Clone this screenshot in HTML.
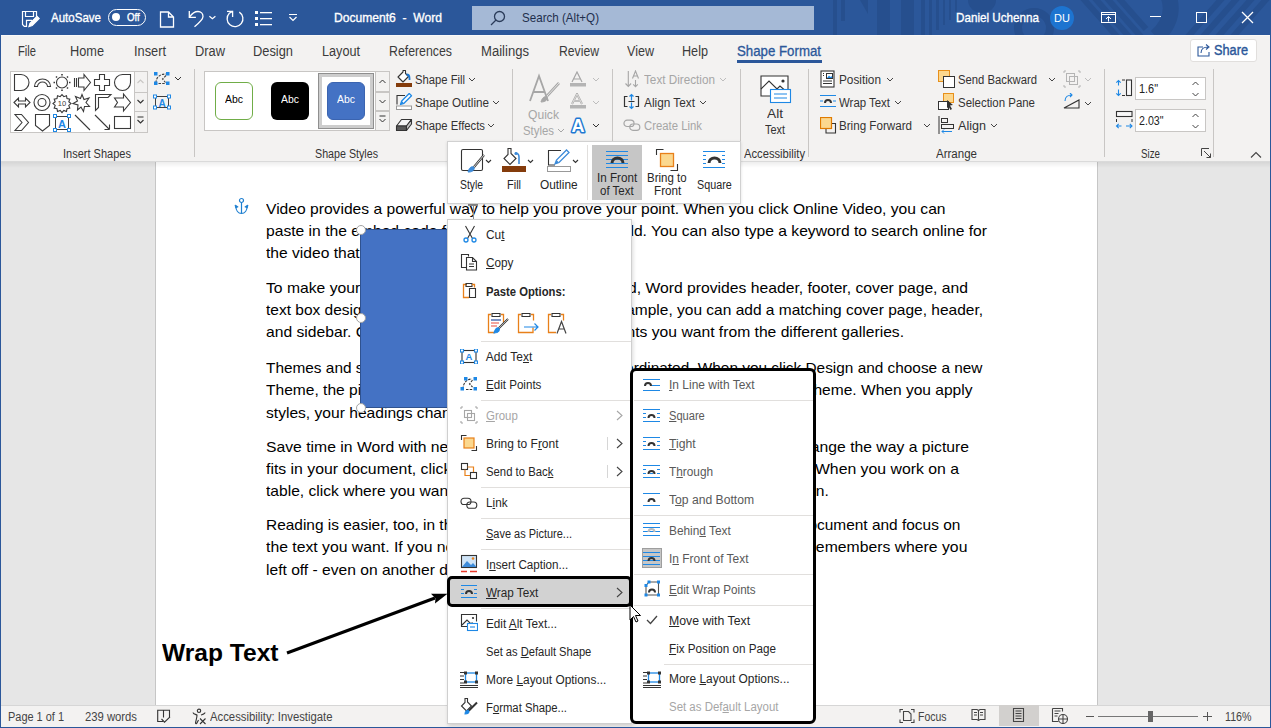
<!DOCTYPE html>
<html><head><meta charset="utf-8">
<style>
*{box-sizing:border-box}
html,body{margin:0;padding:0}
body{width:1271px;height:728px;overflow:hidden;position:relative;background:#e6e6e6;font-family:"Liberation Sans",sans-serif;color:#262626}
.a{position:absolute;white-space:nowrap}
#title{left:0;top:0;width:1271px;height:35px;background:#2b579a;overflow:hidden}
.tw{color:#fff;font-size:13px;-webkit-text-stroke:0.35px #fff}
#ribbon{left:1px;top:35px;width:1269px;height:127px;background:#f3f2f1;border-top:1px solid #faf9f8;border-bottom:1px solid #dadada}
.tab{font-size:13.8px;color:#3b3b3b;top:44px}
.rl{font-size:12px;color:#333}
.sep{position:absolute;width:1px;background:#c8c6c4}
#doc{left:1px;top:162px;width:1269px;height:544px;background:#e6e6e6}
#page{left:155px;top:162px;width:943px;height:544px;background:#fff;border-left:1px solid #c6c6c6;border-right:1px solid #c6c6c6}
.pl{font-size:15px;color:#000;position:absolute;white-space:nowrap;left:266px}
#status{left:1px;top:705px;width:1269px;height:22px;background:#f3f2f1;border-top:1px solid #d6d6d6}
.st{font-size:12px;color:#444;top:709px}
</style></head><body>
<div id="title" class="a"></div>

<!-- TITLE BAR -->
<svg class="a" style="left:0;top:0" width="1271" height="35">
 <g fill="#264f8e">
  <rect x="833" y="0" width="4" height="35"></rect><rect x="841" y="0" width="4" height="21"></rect>
  <path d="M860 0h8v14z"></path>
  <rect x="877" y="0" width="13" height="35"></rect><rect x="901" y="0" width="13" height="35"></rect>
  <rect x="921" y="0" width="4" height="35"></rect><rect x="929" y="0" width="3" height="35"></rect><rect x="936" y="0" width="3" height="30"></rect><rect x="943" y="0" width="2" height="25"></rect><rect x="949" y="0" width="2" height="20"></rect><rect x="955" y="0" width="2" height="12"></rect>
  <path d="M968 0a14 13 0 0 0 28 0z"></path>
 </g>
 <g fill="none" stroke="#264f8e">
  <circle cx="1034" cy="28" r="16" stroke-width="8"></circle>
  <path d="M1080 -5l40 45M1092 -5l40 45M1104 -5l40 45M1116 -5l30 34" stroke-width="6"></path>
  <path d="M1168 -5c6 15 2 30-12 42" stroke-width="16"></path>
  <path d="M1225 -5l-40 45M1240 -5l-40 45M1255 -5l-40 45M1270 -5l-40 45" stroke-width="6"></path>
 </g>
</svg>
<svg class="a" style="left:20px;top:9px" width="20" height="19" viewBox="0 0 20 19" fill="none" stroke="#fff" stroke-width="1.2"><path d="M16.5 7.5V2.5H2.5v13l1.8 1.8h2.2v-6h5.5"></path><path d="M5.5 2.5v5h8v-5"></path><path d="M9 17.5l1-3.2 7-7 2.2 2.2-7 7z" fill="#fff"></path></svg>
<div class="a tw" w="50" style="left: 51px; top: 10px; font-size: 13.5px; transform: scaleX(0.854); transform-origin: 0px 0px;">AutoSave</div>
<div class="a" style="left:108px;top:9px;width:38px;height:17px;border:1.3px solid #fff;border-radius:9px"></div>
<div class="a" style="left:112px;top:13px;width:8px;height:8px;background:#fff;border-radius:50%"></div>
<div class="a tw" w="12.7" style="left: 127px; top: 10.8px; font-size: 11px; transform: scaleX(0.8768); transform-origin: 0px 0px;">Off</div>
<svg class="a" style="left:159px;top:11px" width="16" height="17" fill="none" stroke="#fff" stroke-width="1.3"><path d="M1.5 1h8l5 5v10h-13z M9.5 1v5h5"></path></svg>
<svg class="a" style="left:187px;top:10px" width="30" height="18" fill="none" stroke="#fff" stroke-width="1.3"><path d="M2.3 1.1V7.4H8.9"></path><path d="M2.5 7.2C5 3.5 8 1.5 11 1.5C14 1.5 16 3.8 16 6.5C16 9 14.5 11 7.5 16.7"></path><path d="M22.4 6.2l3 2.5 3-2.5" stroke-width="1.2"></path></svg>
<svg class="a" style="left:224px;top:9px" width="21" height="20" fill="none" stroke="#fff" stroke-width="1.3"><path d="M15.3 3.1A7.9 7.9 0 1 1 5.3 4.3L8.6 2.4"></path><path d="M3 2.4H8.6V8"></path></svg>
<svg class="a" style="left:255px;top:10px" width="18" height="17" fill="#fff"><rect x="0" y="1" width="3" height="3"></rect><rect x="0" y="7" width="3" height="3"></rect><rect x="0" y="13" width="3" height="3"></rect><rect x="5" y="2" width="12" height="1.3"></rect><rect x="5" y="8" width="12" height="1.3"></rect><rect x="5" y="14" width="12" height="1.3"></rect></svg>
<svg class="a" style="left:288px;top:13px" width="10" height="9" fill="none" stroke="#fff" stroke-width="1.2"><path d="M1 1.5h8M1.5 4l3.5 3.5 3.5-3.5"></path></svg>
<div class="a tw" w="108" style="left: 334px; top: 10px; font-size: 13.5px; transform: scaleX(0.8959); transform-origin: 0px 0px;">Document6&nbsp; -&nbsp; Word</div>
<div class="a" style="left:472px;top:6px;width:342px;height:24px;background:#a5b9d6"></div>
<svg class="a" style="left:490px;top:10px" width="16" height="16" fill="none" stroke="#2b3c5a" stroke-width="1.3"><circle cx="9.5" cy="6.5" r="5"></circle><path d="M6 10L1 15"></path></svg>
<div class="a" w="77" style="left: 522px; top: 10px; font-size: 13.5px; color: rgb(31, 47, 77); transform: scaleX(0.8588); transform-origin: 0px 0px;">Search (Alt+Q)</div>
<div class="a tw" w="83" style="left: 956px; top: 10px; font-size: 13.5px; transform: scaleX(0.864); transform-origin: 0px 0px;">Daniel Uchenna</div>
<div class="a" style="left:1050px;top:6px;width:24px;height:24px;border-radius:50%;background:#1d74d0;color:#fff;font-size:11px;text-align:center;line-height:24px">DU</div>
<svg class="a" style="left:1101px;top:12px" width="15" height="11" fill="none" stroke="#fff" stroke-width="1"><rect x="0.5" y="0.5" width="14" height="10"></rect><path d="M0.5 2.5h14M7.5 9.5V4.5M5 7l2.5-2.5L10 7"></path></svg>
<div class="a" style="left:1150px;top:16px;width:11px;height:1px;background:#fff"></div>
<div class="a" style="left:1196px;top:12px;width:11px;height:11px;border:1.2px solid #fff"></div>
<svg class="a" style="left:1241px;top:11px" width="13" height="13" stroke="#fff" stroke-width="1.3"><path d="M1 1l11 11M12 1L1 12"></path></svg>
<div id="ribbon" class="a"></div>

<!-- TABS -->
<div class="a tab" w="18" style="left: 18px; transform: scaleX(0.8096); transform-origin: 0px 0px;">File</div>
<div class="a tab" w="34" style="left: 70px; transform: scaleX(0.9236); transform-origin: 0px 0px;">Home</div>
<div class="a tab" w="32" style="left: 134px; transform: scaleX(0.9271); transform-origin: 0px 0px;">Insert</div>
<div class="a tab" w="30" style="left: 195px; transform: scaleX(0.9316); transform-origin: 0px 0px;">Draw</div>
<div class="a tab" w="40" style="left: 253px; transform: scaleX(0.9312); transform-origin: 0px 0px;">Design</div>
<div class="a tab" w="38" style="left: 322px; transform: scaleX(0.917); transform-origin: 0px 0px;">Layout</div>
<div class="a tab" w="63" style="left: 389px; transform: scaleX(0.8928); transform-origin: 0px 0px;">References</div>
<div class="a tab" w="48" style="left: 481px; transform: scaleX(0.9484); transform-origin: 0px 0px;">Mailings</div>
<div class="a tab" w="40" style="left: 559px; transform: scaleX(0.884); transform-origin: 0px 0px;">Review</div>
<div class="a tab" w="27" style="left: 627px; transform: scaleX(0.9104); transform-origin: 0px 0px;">View</div>
<div class="a tab" w="26" style="left: 682px; transform: scaleX(0.9158); transform-origin: 0px 0px;">Help</div>
<div class="a tab" w="84" style="left: 737px; color: rgb(43, 87, 154); -webkit-text-stroke: 0.3px rgb(43, 87, 154); transform: scaleX(0.9607); transform-origin: 0px 0px;">Shape Format</div>
<div class="a" style="left:737px;top:60px;width:85px;height:3px;background:#2b579a"></div>
<div class="a" style="left:1190px;top:39px;width:67px;height:23px;background:#fff;border:1px solid #e1dfdd;border-radius:3px"></div>
<svg class="a" style="left:1197px;top:43px" width="14" height="14" fill="none" stroke="#2b579a" stroke-width="1.1"><path d="M6 4H1v9h11V9"></path><path d="M4 10c0-4 3-6 7-6M9 1.5l3 2.5-3 2.5"></path></svg>
<div class="a" w="34" style="left: 1214px; top: 42px; font-size: 14px; color: rgb(43, 87, 154); -webkit-text-stroke: 0.4px rgb(43, 87, 154); transform: scaleX(0.9101); transform-origin: 0px 0px;">Share</div>

<!-- INSERT SHAPES -->
<div class="a" style="left:10px;top:71px;width:138px;height:62px;background:#fff;border:1px solid #c8c6c4"></div>
<div class="a" style="left:134px;top:72px;width:13px;height:60px;background:#f3f2f1;border-left:1px solid #c8c6c4"></div>
<div class="a" style="left:134px;top:92px;width:13px;height:1px;background:#c8c6c4"></div>
<div class="a" style="left:134px;top:111px;width:13px;height:1px;background:#c8c6c4"></div>
<svg class="a" style="left:10px;top:71px" width="140" height="62" fill="none" stroke="#3a3a3a" stroke-width="1.1">
 <path d="M4.5 3.5h6.5a8 8 0 0 1 0 16H4.5z"></path>
 <path d="M24.5 15.5a8 7.5 0 0 1 16 0h-3a5 4.5 0 0 0-10 0z"></path>
 <circle cx="52" cy="11.5" r="5.5"></circle><path d="M52 3v1.5M52 18.5V20M43.5 11.5H45M59 11.5h1.5M46 5.5l1 1M57 16.5l1 1M58 5.5l-1 1M47 16.5l-1 1" stroke-width="1.6"></path>
 <path d="M64.5 7v9M66.5 7v9M68.5 7h5.5V3.5l6.5 8-6.5 8V16h-5.5z"></path>
 <path d="M89.5 3.5h5v5h5v6h-5v5h-5v-5h-5v-6h5z"></path>
 <path d="M120 3.5h-7.5a8 8 0 1 0 8 8V3.5z"></path>
 <path d="M4 31.5l4.5-4.5v3h7v-3l4.5 4.5-4.5 4.5v-3h-7v3z"></path>
 <circle cx="32" cy="31.5" r="8"></circle><circle cx="32" cy="31.5" r="4"></circle>
 <path d="M52 23.5l1.8 2.2 2.7-1 0.5 2.8 2.8 0.6-1 2.7 2.2 1.8-2.2 1.8 1 2.7-2.8 0.6-0.5 2.8-2.7-1-1.8 2.2-1.8-2.2-2.7 1-0.5-2.8-2.8-0.6 1-2.7-2.2-1.8 2.2-1.8-1-2.7 2.8-0.6 0.5-2.8 2.7 1z"></path>
 <text x="52" y="34.5" font-size="7.5" fill="#3a3a3a" stroke="none" text-anchor="middle" font-family="Liberation Sans">10</text>
 <path d="M72 23.5l2 5 5-1.5-3 4.5 3.5 4-5 0-1 5-2.5-4.5-3.5 3 0.5-5-5-1.5 4.5-2.5-2-4.5 5 2z"></path>
 <path d="M85.5 39.5v-16h15.5l-3 3H88.5v10z"></path>
 <path d="M104.5 27h9v-4l7 8.5-7 8.5v-4h-9l3-4.5z"></path>
 <path d="M5 43.5h6.5l7 8-7 8H5l7-8z"></path>
 <path d="M25.5 43.5h14v11l-7 5.5-7-5.5z"></path>
 <path d="M65 44l15 15M85 44l14 14M99.5 58.5v-5M99.5 58.5h-5"></path>
 <rect x="104.5" y="45.5" width="16" height="12"></rect>
 <path d="M127.5 12l3-3 3 3" stroke="#c8c6c4"></path>
 <path d="M127.5 29l3 3 3-3" stroke="#333"></path>
 <path d="M127.5 46h6M127.5 49l3 3 3-3" stroke="#333"></path>
</svg>
<svg class="a" style="left:52px;top:113px" width="20" height="20"><rect x="3.5" y="3.5" width="13" height="13" fill="none" stroke="#404040"></rect><g fill="#fff" stroke="#1e88e5"><rect x="1.5" y="1.5" width="3" height="3"></rect><rect x="15.5" y="1.5" width="3" height="3"></rect><rect x="1.5" y="15.5" width="3" height="3"></rect><rect x="15.5" y="15.5" width="3" height="3"></rect></g><text x="10" y="15" font-size="11" font-weight="bold" fill="#1e88e5" text-anchor="middle" font-family="Liberation Sans">A</text></svg>
<svg class="a" style="left:153px;top:71px" width="30" height="15" fill="none"><path d="M3 12c0-5 3-9 10-9M5.5 12.5h7M13 4.5l-3.5 3.5 3 3.5" stroke="#404040" stroke-width="1.1" stroke-dasharray="2.5 1.2"></path><g fill="#1e88e5"><rect x="1" y="1" width="3.5" height="3.5"></rect><rect x="13" y="1" width="3.5" height="3.5"></rect><rect x="1" y="10.5" width="3.5" height="3.5"></rect><rect x="13" y="10.5" width="3.5" height="3.5"></rect></g><path d="M22 6l3 3 3-3" stroke="#333"></path></svg>
<svg class="a" style="left:152px;top:94px" width="20" height="16"><rect x="3.5" y="2.5" width="13" height="11" fill="none" stroke="#404040"></rect><g fill="#fff" stroke="#1e88e5"><rect x="1.5" y="1" width="3" height="3"></rect><rect x="15.5" y="1" width="3" height="3"></rect><rect x="1.5" y="12" width="3" height="3"></rect><rect x="15.5" y="12" width="3" height="3"></rect></g><text x="10" y="12.5" font-size="10" font-weight="bold" fill="#1e88e5" text-anchor="middle" font-family="Liberation Sans">A</text></svg>
<div class="a rl" w="68" style="left: 63px; top: 146.7px; transform: scaleX(0.9183); transform-origin: 0px 0px;">Insert Shapes</div>
<div class="sep" style="left:194px;top:69px;height:88px"></div>

<!-- SHAPE STYLES -->
<div class="a" style="left:204px;top:71px;width:186px;height:60px;background:#fff;border:1px solid #c8c6c4"></div>
<div class="a" style="left:375px;top:71px;width:15px;height:60px;background:#f3f2f1;border:1px solid #c8c6c4"></div>
<div class="a" style="left:375px;top:91px;width:15px;height:2px;background:#c8c6c4"></div>
<div class="a" style="left:375px;top:110px;width:15px;height:2px;background:#c8c6c4"></div>
<svg class="a" style="left:375px;top:71px" width="15" height="60" fill="none" stroke="#333" stroke-width="1"><path d="M4.5 12l3-3 3 3M4.5 29l3 3 3-3M4.5 45h6M4.5 48l3 3 3-3"></path></svg>
<div class="a" style="left:215px;top:82px;width:38px;height:38px;border:1.3px solid #70ad47;border-radius:6px;background:#fff"></div>
<div class="a" w="18" style="left: 225px; top: 93px; font-size: 11px; color: rgb(0, 0, 0); transform: scaleX(0.9489); transform-origin: 0px 0px;">Abc</div>
<div class="a" style="left:271px;top:82px;width:38px;height:38px;border-radius:6px;background:#000"></div>
<div class="a" w="18" style="left: 281px; top: 93px; font-size: 11px; color: rgb(255, 255, 255); transform: scaleX(0.9489); transform-origin: 0px 0px;">Abc</div>
<div class="a" style="left:318px;top:73px;width:56px;height:56px;border:1px solid #8f8f8f;box-shadow:inset 0 0 0 3px #cdcdcd;background:#fff"></div>
<div class="a" style="left:327px;top:82px;width:38px;height:38px;border-radius:6px;background:#4472c4;border:1px solid #3b64b0"></div>
<div class="a" w="18" style="left: 337px; top: 93px; font-size: 11px; color: rgb(255, 255, 255); transform: scaleX(0.9489); transform-origin: 0px 0px;">Abc</div>

<svg class="a" style="left:395px;top:69px" width="18" height="19" fill="none"><path d="M8 1.5h2.5v3l3 3-5.5 5.5-5-5 5-5z" fill="#fff" stroke="#333" stroke-width="1.1" stroke-linejoin="round"></path><path d="M11.5 5.5c2 0 3 1.5 3 3.5v2" stroke="#1e78d2" stroke-width="1.8"></path><rect x="1" y="14" width="16" height="4" fill="#843c0c"></rect></svg>
<div class="a rl" w="50" style="left: 415px; top: 73px; transform: scaleX(0.9368); transform-origin: 0px 0px;">Shape Fill</div>
<svg class="a" style="left:468px;top:77px" width="8" height="5" fill="none" stroke="#444"><path d="M1 1l3 3 3-3"></path></svg>
<svg class="a" style="left:395px;top:93px" width="18" height="18" fill="none"><path d="M2 11.5V2.5h8" stroke="#333" stroke-width="1.1"></path><path d="M5.5 11.5l1.2-3.5 7.5-7.5 2.3 2.3-7.5 7.5z" fill="#fff" stroke="#1e88e5" stroke-width="1.3" stroke-linejoin="round"></path><path d="M5.5 11.5l3.5-1.2-2.3-2.3z" fill="#1e88e5"></path><rect x="1.5" y="13" width="15" height="3.5" fill="#fff" stroke="#999"></rect></svg>
<div class="a rl" w="74" style="left: 415px; top: 96px; transform: scaleX(0.9729); transform-origin: 0px 0px;">Shape Outline</div>
<svg class="a" style="left:492px;top:100px" width="8" height="5" fill="none" stroke="#444"><path d="M1 1l3 3 3-3"></path></svg>
<svg class="a" style="left:395px;top:118px" width="18" height="14" fill="none" stroke-linejoin="round"><path d="M1.5 8l5-6.5h10l-5 6.5z" fill="#f5f5f5" stroke="#333" stroke-width="1.1"></path><path d="M1.5 8h10v4.5h-10z" fill="#595959" stroke="#333" stroke-width="1.1"></path><path d="M11.5 8l5-6.5v4.5l-5 6.5z" fill="#c8c8c8" stroke="#333" stroke-width="1.1"></path></svg>
<div class="a rl" w="70" style="left: 415px; top: 119px; transform: scaleX(0.9396); transform-origin: 0px 0px;">Shape Effects</div>
<svg class="a" style="left:487px;top:123px" width="8" height="5" fill="none" stroke="#444"><path d="M1 1l3 3 3-3"></path></svg>
<div class="a rl" w="63" style="left: 315px; top: 146.7px; transform: scaleX(0.8909); transform-origin: 0px 0px;">Shape Styles</div>
<div class="sep" style="left:512px;top:69px;height:88px"></div>

<!-- WORDART -->
<svg class="a" style="left:528px;top:73px" width="34" height="32" fill="none" stroke="#a6a6a6" stroke-width="1.8"><path d="M2 28L11 3l9 25M5.5 19h11"></path><path d="M13 29c1-4 3-6 6-5 1 2-1 5-6 5z" fill="#a6a6a6" stroke-width="1"></path><path d="M19 23l12-13" stroke-width="2.6"></path><path d="M19 23l12-13" stroke="#f3f2f1" stroke-width="0.8"></path></svg>
<div class="a rl" w="31" style="left: 528px; top: 106.5px; font-size: 13px; color: rgb(166, 166, 166); transform: scaleX(0.9328); transform-origin: 0px 0px;">Quick</div>
<div class="a rl" w="31" style="left: 523px; top: 122.5px; font-size: 13px; color: rgb(166, 166, 166); transform: scaleX(0.8756); transform-origin: 0px 0px;">Styles</div>
<svg class="a" style="left:557px;top:128px" width="8" height="5" fill="none" stroke="#a6a6a6"><path d="M1 1l3 3 3-3"></path></svg>
<svg class="a" style="left:569px;top:71px" width="18" height="17"><path d="M3 11L8 1l5 10M4.5 8h7" fill="none" stroke="#a6a6a6" stroke-width="1.2"></path><rect x="1" y="12" width="16" height="3.5" fill="#b4b4b4"></rect></svg>
<svg class="a" style="left:592px;top:77px" width="8" height="5" fill="none" stroke="#bdbdbd"><path d="M1 1l3 3 3-3"></path></svg>
<svg class="a" style="left:569px;top:93px" width="18" height="17"><path d="M3 11L8 1l5 10M4.5 8h7" fill="none" stroke="#a6a6a6" stroke-width="2"></path><path d="M3 11L8 1l5 10M4.5 8h7" fill="none" stroke="#f3f2f1" stroke-width="0.7"></path><rect x="1" y="12" width="16" height="3.5" fill="#b4b4b4"></rect></svg>
<svg class="a" style="left:592px;top:100px" width="8" height="5" fill="none" stroke="#bdbdbd"><path d="M1 1l3 3 3-3"></path></svg>
<svg class="a" style="left:568px;top:115px" width="20" height="19"><text x="10" y="16.5" text-anchor="middle" font-family="Liberation Sans" font-weight="bold" font-size="18" fill="#fff" stroke="#1e78d2" stroke-width="3" paint-order="stroke" stroke-linejoin="round">A</text></svg>
<svg class="a" style="left:592px;top:123px" width="8" height="5" fill="none" stroke="#333"><path d="M1 1l3 3 3-3"></path></svg>
<div class="sep" style="left:612px;top:69px;height:88px"></div>

<!-- TEXT -->
<svg class="a" style="left:623px;top:70px" width="18" height="18" fill="none" stroke="#a6a6a6" stroke-width="1.1"><path d="M5.3 1v15.5M2.5 13.5l2.8 3 2.8-3"></path><path d="M9.5 8.5L12.5 1l3 7.5M10.5 6h4M12.5 10v6.5M10.2 14.3l2.3 2.3 2.3-2.3"></path></svg>
<div class="a rl" w="71" style="left: 644px; top: 73px; color: rgb(166, 166, 166); transform: scaleX(0.9766); transform-origin: 0px 0px;">Text Direction</div>
<svg class="a" style="left:719px;top:77px" width="8" height="5" fill="none" stroke="#bdbdbd"><path d="M1 1l3 3 3-3"></path></svg>
<svg class="a" style="left:623px;top:93px" width="18" height="18" fill="none" stroke-width="1.2"><path d="M4.5 3.5h-3v10h3M12.5 3.5h3v10h-3" stroke="#333"></path><path d="M5.5 8.5h6" stroke="#333" stroke-width="1"></path><path d="M8.5 7.5V1.5M6.5 3.5l2-2 2 2M8.5 9.5v6M6.5 13.5l2 2 2-2" stroke="#1e88e5"></path></svg>
<div class="a rl" w="51" style="left: 644px; top: 96px; transform: scaleX(0.9843); transform-origin: 0px 0px;">Align Text</div>
<svg class="a" style="left:699px;top:100px" width="8" height="5" fill="none" stroke="#444"><path d="M1 1l3 3 3-3"></path></svg>
<svg class="a" style="left:623px;top:119px" width="18" height="13" fill="none" stroke="#a6a6a6" stroke-width="1.2"><rect x="1" y="1.2" width="10" height="6.3" rx="3.1"></rect><rect x="6.8" y="5" width="10" height="6.3" rx="3.1"></rect></svg>
<div class="a rl" w="58" style="left: 644px; top: 119px; color: rgb(166, 166, 166); transform: scaleX(0.945); transform-origin: 0px 0px;">Create Link</div>
<div class="sep" style="left:740px;top:69px;height:88px"></div>

<!-- ACCESSIBILITY -->
<svg class="a" style="left:760px;top:75px" width="32" height="29"><path d="M1 1h27v20H1z" fill="#fff" stroke="#333" stroke-width="1.1"></path><path d="M1 14l8-8 8 8 3-3 8 7" fill="none" stroke="#333" stroke-width="1.1"></path><circle cx="23" cy="6" r="1.6" fill="#333"></circle><rect x="10.5" y="14.5" width="20" height="13" fill="#fff" stroke="#1e88e5" stroke-width="1.1"></rect><path d="M14 19h13M14 23h13" stroke="#1e88e5" stroke-width="1.1"></path></svg>
<div class="a rl" w="16" style="left: 767px; top: 106px; font-size: 13px; transform: scaleX(1.0546); transform-origin: 0px 0px;">Alt</div>
<div class="a rl" w="20" style="left: 765px; top: 122px; font-size: 13px; transform: scaleX(0.8388); transform-origin: 0px 0px;">Text</div>
<div class="a rl" w="61" style="left: 744px; top: 146.7px; transform: scaleX(0.9333); transform-origin: 0px 0px;">Accessibility</div>
<div class="sep" style="left:808px;top:69px;height:88px"></div>

<!-- ARRANGE -->
<svg class="a" style="left:820px;top:70px" width="16" height="18" fill="none"><rect x="1" y="1" width="13" height="16" fill="#fff" stroke="#333" stroke-width="1.1"></rect><rect x="6.5" y="3.5" width="6" height="5" stroke="#333"></rect><path d="M7 8l2-2.5 1.5 1.5 1-1 1 2z" fill="#1e88e5"></path><path d="M3 3.5h1M3 5.5h1M3 11h9M3 13.5h9" stroke="#333"></path></svg>
<div class="a rl" w="42" style="left: 839px; top: 73px; transform: scaleX(0.9835); transform-origin: 0px 0px;">Position</div>
<svg class="a" style="left:886px;top:77px" width="8" height="5" fill="none" stroke="#444"><path d="M1 1l3 3 3-3"></path></svg>
<svg class="a" style="left:820px;top:94px" width="17" height="14"><path d="M0 1.5h16M0 12.5h16M0 7h3M13 7h3" stroke="#1e88e5"></path><path d="M5 9a3 3 0 0 1 6 0" fill="none" stroke="#333" stroke-width="2"></path></svg>
<div class="a rl" w="51" style="left: 839px; top: 96px; transform: scaleX(0.9519); transform-origin: 0px 0px;">Wrap Text</div>
<svg class="a" style="left:894px;top:100px" width="8" height="5" fill="none" stroke="#444"><path d="M1 1l3 3 3-3"></path></svg>
<svg class="a" style="left:820px;top:117px" width="17" height="17" fill="none"><path d="M11 6.5h4.5v9.5H6V12" stroke="#333" stroke-width="1.1"></path><rect x="0.5" y="0.5" width="11" height="11" fill="#fbd88f" stroke="#e07b00" stroke-width="1.2"></rect></svg>
<div class="a rl" w="73" style="left: 839px; top: 119px; transform: scaleX(0.9687); transform-origin: 0px 0px;">Bring Forward</div>
<svg class="a" style="left:923px;top:123px" width="8" height="5" fill="none" stroke="#444"><path d="M1 1l3 3 3-3"></path></svg>
<svg class="a" style="left:938px;top:70px" width="18" height="18"><rect x="0.5" y="0.5" width="11" height="11" fill="#fcd78d" stroke="#e8901a"></rect><rect x="5.5" y="6.5" width="11" height="11" fill="#fff" stroke="#333"></rect></svg>
<div class="a rl" w="79" style="left: 958px; top: 73px; transform: scaleX(0.94); transform-origin: 0px 0px;">Send Backward</div>
<svg class="a" style="left:1048px;top:77px" width="8" height="5" fill="none" stroke="#444"><path d="M1 1l3 3 3-3"></path></svg>
<svg class="a" style="left:938px;top:93px" width="18" height="18"><rect x="5.5" y="0.5" width="10" height="9" fill="#fcd78d" stroke="#e8901a"></rect><rect x="0.5" y="8.5" width="10" height="8" fill="#fff" stroke="#333"></rect><path d="M9 7l6 5-3 0.5 2 3.5-1.5 1-2-3.5-1.5 2z" fill="#333"></path></svg>
<div class="a rl" w="77" style="left: 958px; top: 96px; transform: scaleX(0.9537); transform-origin: 0px 0px;">Selection Pane</div>
<svg class="a" style="left:938px;top:116px" width="18" height="18" fill="none"><path d="M1 0v18" stroke="#333"></path><rect x="3.5" y="2.5" width="6" height="4" stroke="#333"></rect><rect x="3.5" y="8.5" width="12" height="4" stroke="#333"></rect><path d="M4 15.5h10M6 13.5l-2 2 2 2" stroke="#1e88e5"></path></svg>
<div class="a rl" w="28" style="left: 958px; top: 119px; transform: scaleX(1.0492); transform-origin: 0px 0px;">Align</div>
<svg class="a" style="left:990px;top:123px" width="8" height="5" fill="none" stroke="#444"><path d="M1 1l3 3 3-3"></path></svg>
<svg class="a" style="left:1063px;top:70px" width="18" height="18" fill="none" stroke="#b4b4b4"><rect x="3.5" y="3.5" width="8" height="8"></rect><rect x="6.5" y="6.5" width="8" height="8"></rect><path d="M1 1h2M15 1h2M1 17h2M15 17h2M1 1v2M17 1v2M1 17v-2M17 17v-2"></path></svg>
<svg class="a" style="left:1084px;top:77px" width="8" height="5" fill="none" stroke="#bdbdbd"><path d="M1 1l3 3 3-3"></path></svg>
<svg class="a" style="left:1063px;top:93px" width="18" height="16" fill="none"><path d="M1 15L16 7v8z" stroke="#333" stroke-width="1.1"></path><path d="M2 8c0-4 3-6 7-6M7 0l2 2-2 2" stroke="#1e88e5" stroke-width="1.1"></path></svg>
<svg class="a" style="left:1084px;top:101px" width="8" height="5" fill="none" stroke="#444"><path d="M1 1l3 3 3-3"></path></svg>
<div class="a rl" w="41" style="left: 936px; top: 146.7px; transform: scaleX(0.9601); transform-origin: 0px 0px;">Arrange</div>
<div class="sep" style="left:1104px;top:69px;height:88px"></div>

<!-- SIZE -->
<svg class="a" style="left:1115px;top:78px" width="18" height="21" fill="none"><path d="M3.5 2.5v5M1.3 4.7l2.2-2.2 2.2 2.2M3.5 11.5v6M1.3 15.3l2.2 2.2 2.2-2.2" stroke="#1e88e5" stroke-width="1.1"></path><rect x="11.5" y="2" width="5" height="15.5" fill="#f8f8f8" stroke="#333" stroke-width="1.1"></rect><path d="M7 2h3M7 17.5h3" stroke="#333"></path></svg>
<div class="a" style="left:1135px;top:77px;width:71px;height:23px;background:#fff;border:1px solid #c8c6c4"></div>
<div class="a" w="19" style="left: 1139px; top: 81px; font-size: 13px; color: rgb(34, 34, 34); transform: scaleX(0.8375); transform-origin: 0px 0px;">1.6"</div>
<svg class="a" style="left:1191px;top:81px" width="9" height="16" fill="none" stroke="#444"><path d="M1.5 4l3-3 3 3M1.5 12l3 3 3-3"></path></svg>
<svg class="a" style="left:1115px;top:110px" width="18" height="20" fill="none"><rect x="1.5" y="1.5" width="15.5" height="5" fill="#f8f8f8" stroke="#333" stroke-width="1.1"></rect><path d="M1.5 9v3M17 9v3" stroke="#333"></path><path d="M1.5 16h5M3.7 13.8L1.5 16l2.2 2.2M11 16h6M14.8 13.8L17 16l-2.2 2.2" stroke="#1e88e5" stroke-width="1.1"></path></svg>
<div class="a" style="left:1135px;top:109px;width:71px;height:23px;background:#fff;border:1px solid #c8c6c4"></div>
<div class="a" w="24.5" style="left: 1139px; top: 113px; font-size: 13px; color: rgb(34, 34, 34); transform: scaleX(0.8188); transform-origin: 0px 0px;">2.03"</div>
<svg class="a" style="left:1191px;top:113px" width="9" height="16" fill="none" stroke="#444"><path d="M1.5 4l3-3 3 3M1.5 12l3 3 3-3"></path></svg>
<div class="a rl" w="19" style="left: 1141px; top: 146.7px; transform: scaleX(0.8139); transform-origin: 0px 0px;">Size</div>
<svg class="a" style="left:1201px;top:148px" width="11" height="11" fill="none" stroke="#444"><path d="M0.5 8V0.5H8M3 3l6.5 6.5M9.5 5.5v4h-4"></path></svg>
<div class="sep" style="left:1213px;top:69px;height:88px"></div>
<svg class="a" style="left:1250px;top:151px" width="12" height="8" fill="none" stroke="#444" stroke-width="1.1"><path d="M1 6.5l5-5 5 5"></path></svg>
<div id="doc" class="a"></div>
<div id="page" class="a"></div>
<!-- DOCUMENT TEXT -->
<div class="pl" w="679.5" style="top: 200px; transform: scaleX(1.0417); transform-origin: 0px 0px;">Video provides a powerful way to help you prove your point. When you click Online Video, you can</div>
<div class="pl" w="721.0" style="top: 221.8px; transform: scaleX(1.043); transform-origin: 0px 0px;">paste in the embed code for the video you want to add. You can also type a keyword to search online for</div>
<div class="pl" w="263.6" style="top: 244px; transform: scaleX(1.0399); transform-origin: 0px 0px;">the video that best fits your document.</div>
<div class="pl" w="702.0" style="top: 278.8px; transform: scaleX(1.0463); transform-origin: 0px 0px;">To make your document look professionally produced, Word provides header, footer, cover page, and</div>
<div class="pl" w="717.0" style="top: 300.6px; transform: scaleX(1.0335); transform-origin: 0px 0px;">text box designs that complement each other. For example, you can add a matching cover page, header,</div>
<div class="pl" w="638.0" style="top: 323.3px; transform: scaleX(1.0444); transform-origin: 0px 0px;">and sidebar. Click Insert and then choose the elements you want from the different galleries.</div>
<div class="pl" w="716.5" style="top: 358.8px; transform: scaleX(1.0254); transform-origin: 0px 0px;">Themes and styles also help keep your document coordinated. When you click Design and choose a new</div>
<div class="pl" w="706.5" style="top: 380.6px; transform: scaleX(1.0372); transform-origin: 0px 0px;">Theme, the pictures, charts, and SmartArt graphics change to match your new theme. When you apply</div>
<div class="pl" w="377.2" style="top: 403.5px; transform: scaleX(1.0399); transform-origin: 0px 0px;">styles, your headings change to match the new theme.</div>
<div class="pl" w="703.0" style="top: 437.8px; transform: scaleX(1.0482); transform-origin: 0px 0px;">Save time in Word with new buttons that show up where you need them. To change the way a picture</div>
<div class="pl" w="693.0" style="top: 459.5px; transform: scaleX(1.0534); transform-origin: 0px 0px;">fits in your document, click it and a button for layout options appears next to it. When you work on a</div>
<div class="pl" w="562.7" style="top: 482px; transform: scaleX(1.0399); transform-origin: 0px 0px;">table, click where you want to add a row or a column, and then click the plus sign.</div>
<div class="pl" w="694.3" style="top: 516.3px; transform: scaleX(1.0292); transform-origin: 0px 0px;">Reading is easier, too, in the new Reading view. You can collapse parts of the document and focus on</div>
<div class="pl" w="701.4" style="top: 538.4px; transform: scaleX(1.0506); transform-origin: 0px 0px;">the text you want. If you need to stop reading before you reach the end, Word remembers where you</div>
<div class="pl" w="222.6" style="top: 561px; transform: scaleX(1.04); transform-origin: 0px 0px;">left off - even on another device.</div>
<svg class="a" style="left:234px;top:197px" width="16" height="18" fill="none" stroke="#1e7fd0" stroke-width="1.2"><circle cx="7.5" cy="3.5" r="2"></circle><path d="M7.5 5.5v11M1.8 8.5c0 5 2.5 8 5.7 8s5.7-3 5.7-8"></path><path d="M1 8l3.2 1.8-2.4 1.2z M14 8l-3.2 1.8 2.4 1.2z" fill="#1e7fd0" stroke-width="0.8"></path></svg>
<div class="a" style="left:1px;top:162px;width:1269px;height:6px;background:linear-gradient(rgba(0,0,0,0.07),rgba(0,0,0,0))"></div>
<div id="status" class="a"></div>
<!-- STATUS -->
<div class="a" w="56" style="left: 8px; top: 710.1px; font-size: 12px; color: rgb(68, 68, 68); transform: scaleX(0.9122); transform-origin: 0px 0px;">Page 1 of 1</div>
<div class="a" w="52" style="left: 85px; top: 710.1px; font-size: 12px; color: rgb(68, 68, 68); transform: scaleX(0.9391); transform-origin: 0px 0px;">239 words</div>
<svg class="a" style="left:157px;top:709px" width="15" height="15" fill="none" stroke="#333" stroke-width="1.1"><path d="M6 12.5H0.7V1.3h11.8v7M6.5 1.3V8.5"></path><path d="M4.5 10l3 3.2 5.5-5.3"></path></svg>
<svg class="a" style="left:191px;top:708px" width="17" height="17" fill="none" stroke="#333" stroke-width="1.1"><circle cx="8" cy="2.8" r="1.7"></circle><path d="M2 4.5c0 1.5 3 2 4 2.5 0 3-1 5-1.5 8 0 0.8 1 1 1.3 0.3L7.5 12M14 4.5c0 1.5-2.5 2-4 2.5"></path><path d="M9 10.5l5.5 5.5M14.5 10.5L9 16"></path></svg>
<div class="a" w="122.5" style="left: 210px; top: 710.1px; font-size: 12px; color: rgb(68, 68, 68); transform: scaleX(0.9419); transform-origin: 0px 0px;">Accessibility: Investigate</div>
<svg class="a" style="left:899px;top:708px" width="16" height="16" fill="none" stroke-width="1.1"><path d="M1 4.5v-3h3M12 1.5h3v3M15 11.5v3h-3M4 14.5H1v-3" stroke="#444"></path><path d="M4.5 3.5h5l2.5 2.5v6.5h-7.5z" stroke="#444"></path></svg>
<div class="a" w="28.5" style="left: 917.5px; top: 709.2px; font-size: 13px; color: rgb(68, 68, 68); transform: scaleX(0.8049); transform-origin: 0px 0px;">Focus</div>
<svg class="a" style="left:971px;top:708px" width="15" height="13" fill="none" stroke-width="1.1"><path d="M1 1.5h5l1.5 1 1.5-1h5v10h-5l-1.5 1-1.5-1H1z M7.5 2.5v9M3 4.5h3M3 7h3M9 4.5h3M9 7h3" stroke="#444"></path></svg>
<div class="a" style="left:999px;top:705px;width:40px;height:21px;background:#d2d0ce"></div>
<svg class="a" style="left:1012px;top:707px" width="13" height="16" fill="none" stroke-width="1.1"><path d="M1.5 1.5h10v13h-10z M3.5 4h6M3.5 6.5h6M3.5 9h6M3.5 11.5h6" stroke="#444"></path></svg>
<svg class="a" style="left:1051px;top:707px" width="17" height="17" fill="none" stroke-width="1.1"><path d="M1.5 1.5h10v3M1.5 1.5v13h6M3.5 4h6M3.5 6.5h4M3.5 9h3" stroke="#444"></path><circle cx="12" cy="12" r="4.5" stroke="#444"></circle><path d="M7.5 12h9M12 7.5v9" stroke="#444"></path></svg>
<div class="a" style="left:1086px;top:716px;width:8px;height:1px;background:#555"></div>
<div class="a" style="left:1098px;top:716px;width:100px;height:1px;background:#777"></div>
<div class="a" style="left:1148px;top:711px;width:5px;height:11px;background:#666"></div>
<div class="a" style="left:1203px;top:716px;width:9px;height:1px;background:#555"></div>
<div class="a" style="left:1207px;top:712px;width:1px;height:9px;background:#555"></div>
<div class="a" w="26.5" style="left: 1224.5px; top: 710.1px; font-size: 12px; color: rgb(68, 68, 68); transform: scaleX(0.8889); transform-origin: 0px 0px;">116%</div>
<!-- SHAPE -->
<div class="a" style="left:360px;top:229px;width:227px;height:179px;background:#4472c4;border:1px solid #2f528f"></div>
<div class="a" style="left:356.0px;top:224.5px;width:10px;height:10px;border-radius:50%;background:#fff;border:1.8px solid #a3a3a3"></div>
<div class="a" style="left:356.0px;top:313.0px;width:10px;height:10px;border-radius:50%;background:#fff;border:1.8px solid #a3a3a3"></div>
<div class="a" style="left:356.0px;top:403.0px;width:10px;height:10px;border-radius:50%;background:#fff;border:1.8px solid #a3a3a3"></div>
<div class="a" style="left:468px;top:204px;width:10px;height:1.5px;background:#8c8c8c"></div>
<div class="a" style="left:472.5px;top:204px;width:1.3px;height:16px;background:#8c8c8c"></div>
<!-- MINI TOOLBAR -->
<div class="a" style="left:447px;top:141px;width:294px;height:63px;background:#fff;border:1px solid #d1d1d1;box-shadow:0 1px 3px rgba(0,0,0,0.12)"></div>
<svg class="a" style="left:459px;top:147px" width="36" height="27" fill="none"><rect x="2.5" y="2.5" width="21" height="21" rx="1.5" stroke="#333" stroke-width="1.1"></rect><path d="M9 25c1-4 3-6 6-5 1 2-1 5-5 5z" fill="#3d8bd9" stroke="#3d8bd9"></path><path d="M15 20l10-12" stroke="#333" stroke-width="2.2"></path><path d="M15 20l10-12" stroke="#fff" stroke-width="0.8"></path><path d="M27 13l2.5 2.5 2.5-2.5" stroke="#333" stroke-width="1.1"></path></svg>
<svg class="a" style="left:501px;top:147px" width="36" height="27" fill="none"><path d="M7 1.5h3v5l5 5-6 6-6-6 4-4z" fill="#fff" stroke="#333" stroke-width="1.1"></path><path d="M14 6c3 0 4 2 4 4v7" stroke="#3d8bd9" stroke-width="1.6"></path><circle cx="15" cy="6.5" r="1.6" fill="#3d8bd9"></circle><rect x="1" y="19" width="24" height="6" fill="#843c0c"></rect><path d="M27 13l2.5 2.5 2.5-2.5" stroke="#333" stroke-width="1.1"></path></svg>
<svg class="a" style="left:546px;top:147px" width="36" height="27" fill="none"><path d="M9 18H2.5V3.5H15" stroke="#333" stroke-width="1.1"></path><path d="M9 17l1.5-4 10-10 2.5 2.5-10 10z" stroke="#3d8bd9" stroke-width="1.3" fill="#fff"></path><path d="M9 17l4-1.5-2.5-2.5z" fill="#3d8bd9"></path><rect x="1.5" y="19.5" width="23" height="5" fill="#fff" stroke="#999"></rect><path d="M27 13l2.5 2.5 2.5-2.5" stroke="#333" stroke-width="1.1"></path></svg>
<div class="a" style="left:587px;top:145px;width:1px;height:55px;background:#e1dfdd"></div>
<div class="a" style="left:592px;top:145px;width:50px;height:55px;background:#c6c6c6"></div>
<svg class="a" style="left:606px;top:150px" width="23" height="19"><path d="M0 1.5h22M0 5.5h22M0 9.5h22M0 13.5h22M0 17.5h22" stroke="#1e88e5" stroke-width="1.1"></path><path d="M6 13a5.5 5 0 0 1 11 0" fill="none" stroke="#333" stroke-width="3"></path></svg>
<svg class="a" style="left:655px;top:148px" width="24" height="24" fill="none"><path d="M1.5 7V1.5h7M22.5 16v6.5h-7" stroke="#333" stroke-width="1.1"></path><rect x="5.5" y="5.5" width="13" height="13" fill="#fbd88f" stroke="#e8801a" stroke-width="1.3"></rect></svg>
<svg class="a" style="left:703px;top:150px" width="23" height="19"><path d="M0 1.5h22M0 17.5h22M0 5.5h3M19 5.5h3M0 9.5h3M19 9.5h3M0 13.5h3M19 13.5h3" stroke="#1e88e5" stroke-width="1.1"></path><path d="M6 13a5.5 5 0 0 1 11 0" fill="none" stroke="#333" stroke-width="3"></path></svg>
<div class="a" w="23.0" style="left: 460.4px; top: 177.7px; font-size: 12px; color: rgb(38, 38, 38); transform: scaleX(0.8618); transform-origin: 0px 0px;">Style</div>
<div class="a" w="14.0" style="left: 506.5px; top: 177.7px; font-size: 12px; color: rgb(38, 38, 38); transform: scaleX(0.9134); transform-origin: 0px 0px;">Fill</div>
<div class="a" w="37.6" style="left: 540px; top: 177.7px; font-size: 12px; color: rgb(38, 38, 38); transform: scaleX(0.9887); transform-origin: 0px 0px;">Outline</div>
<div class="a" w="40.2" style="left: 596.6px; top: 171.4px; font-size: 12px; color: rgb(38, 38, 38); transform: scaleX(0.972); transform-origin: 0px 0px;">In Front</div>
<div class="a" w="33.7" style="left: 600px; top: 184.3px; font-size: 12px; color: rgb(38, 38, 38); transform: scaleX(0.959); transform-origin: 0px 0px;">of Text</div>
<div class="a" w="39.6" style="left: 646.6px; top: 171.4px; font-size: 12px; color: rgb(38, 38, 38); transform: scaleX(0.9575); transform-origin: 0px 0px;">Bring to</div>
<div class="a" w="27.3" style="left: 653.6px; top: 184.3px; font-size: 12px; color: rgb(38, 38, 38); transform: scaleX(0.9745); transform-origin: 0px 0px;">Front</div>
<div class="a" w="34.7" style="left: 696.6px; top: 178.1px; font-size: 12px; color: rgb(38, 38, 38); transform: scaleX(0.8966); transform-origin: 0px 0px;">Square</div>
<!-- CONTEXT MENU -->
<div class="a" style="left:447px;top:219px;width:185px;height:505px;background:#fff;border:1px solid #cfcfcf;box-shadow:1px 2px 4px rgba(0,0,0,0.15)"></div>
<div class="a" style="left:481px;top:341px;width:150px;height:1px;background:#e1dfdd"></div>
<div class="a" style="left:481px;top:400px;width:150px;height:1px;background:#e1dfdd"></div>
<div class="a" style="left:481px;top:487px;width:150px;height:1px;background:#e1dfdd"></div>
<div class="a" style="left:481px;top:518px;width:150px;height:1px;background:#e1dfdd"></div>
<div class="a" style="left:481px;top:549px;width:150px;height:1px;background:#e1dfdd"></div>
<div class="a" style="left:481px;top:608px;width:150px;height:1px;background:#e1dfdd"></div>
<div class="a" style="left:447px;top:576px;width:185px;height:31px;background:#d2d2d2;border:3px solid #000;border-radius:5px"></div>
<div class="a" w="18.5" style="left: 485.8px; top: 228.2px; font-size: 12px; color: rgb(38, 38, 38); transform: scaleX(0.99); transform-origin: 0px 0px;">Cu<u>t</u></div>
<div class="a" w="27.4" style="left: 485.8px; top: 256.4px; font-size: 12px; color: rgb(38, 38, 38); transform: scaleX(0.9775); transform-origin: 0px 0px;"><u>C</u>opy</div>
<div class="a" w="79.5" style="left: 485.8px; top: 285.4px; font-size: 12px; color: rgb(38, 38, 38); font-weight: bold; transform: scaleX(0.9387); transform-origin: 0px 0px;">Paste Options:</div>
<div class="a" w="46.5" style="left: 485.8px; top: 350.1px; font-size: 12px; color: rgb(38, 38, 38); transform: scaleX(1); transform-origin: 0px 0px;">Add Te<u>x</u>t</div>
<div class="a" w="55.4" style="left: 485.8px; top: 377.7px; font-size: 12px; color: rgb(38, 38, 38); transform: scaleX(0.9656); transform-origin: 0px 0px;"><u>E</u>dit Points</div>
<div class="a" w="31.8" style="left: 485.8px; top: 408.9px; font-size: 12px; color: rgb(166, 166, 166); transform: scaleX(0.9528); transform-origin: 0px 0px;"><u>G</u>roup</div>
<div class="a" w="72.5" style="left: 485.8px; top: 436.8px; font-size: 12px; color: rgb(38, 38, 38); transform: scaleX(0.997); transform-origin: 0px 0px;">Bring to F<u>r</u>ont</div>
<div class="a" w="67.3" style="left: 485.8px; top: 465.1px; font-size: 12px; color: rgb(38, 38, 38); transform: scaleX(0.9427); transform-origin: 0px 0px;">Send to Bac<u>k</u></div>
<div class="a" w="21.5" style="left: 485.8px; top: 496.1px; font-size: 12px; color: rgb(38, 38, 38); transform: scaleX(0.9752); transform-origin: 0px 0px;">L<u>i</u>nk</div>
<div class="a" w="86.0" style="left: 485.8px; top: 527.1px; font-size: 12px; color: rgb(38, 38, 38); transform: scaleX(0.9143); transform-origin: 0px 0px;"><u>S</u>ave as Picture...</div>
<div class="a" w="82.3" style="left: 485.8px; top: 558.1px; font-size: 12px; color: rgb(38, 38, 38); transform: scaleX(0.9713); transform-origin: 0px 0px;">I<u>n</u>sert Caption...</div>
<div class="a" w="52.3" style="left: 485.8px; top: 586.1px; font-size: 12px; color: rgb(38, 38, 38); transform: scaleX(0.9761); transform-origin: 0px 0px;"><u>W</u>rap Text</div>
<div class="a" w="71.0" style="left: 485.8px; top: 617.1px; font-size: 12px; color: rgb(38, 38, 38); transform: scaleX(0.9791); transform-origin: 0px 0px;">Edit <u>A</u>lt Text...</div>
<div class="a" w="105.3" style="left: 485.8px; top: 645.1px; font-size: 12px; color: rgb(38, 38, 38); transform: scaleX(0.9284); transform-origin: 0px 0px;">Set as <u>D</u>efault Shape</div>
<div class="a" w="120.3" style="left: 485.8px; top: 673.1px; font-size: 12px; color: rgb(38, 38, 38); transform: scaleX(0.9908); transform-origin: 0px 0px;">More <u>L</u>ayout Options...</div>
<div class="a" w="81.0" style="left: 485.8px; top: 701.1px; font-size: 12px; color: rgb(38, 38, 38); transform: scaleX(0.941); transform-origin: 0px 0px;">F<u>o</u>rmat Shape...</div>
<svg class="a" style="left:615px;top:410px" width="9" height="11" fill="none" stroke="#a6a6a6" stroke-width="1.1"><path d="M2 1l5 4.5-5 4.5"></path></svg>
<svg class="a" style="left:615px;top:438px" width="9" height="11" fill="none" stroke="#444" stroke-width="1.1"><path d="M2 1l5 4.5-5 4.5"></path></svg>
<svg class="a" style="left:615px;top:466px" width="9" height="11" fill="none" stroke="#444" stroke-width="1.1"><path d="M2 1l5 4.5-5 4.5"></path></svg>
<svg class="a" style="left:615px;top:587px" width="9" height="11" fill="none" stroke="#444" stroke-width="1.1"><path d="M2 1l5 4.5-5 4.5"></path></svg>
<div class="a" style="left:607px;top:437px;width:1px;height:13px;background:#d6d6d6"></div>
<div class="a" style="left:607px;top:465px;width:1px;height:13px;background:#d6d6d6"></div>
<svg class="a" style="left:461px;top:225px" width="18" height="18" fill="none" stroke-width="1.1"><path d="M4.5 1l7 12.5M13.5 1l-7 12.5" stroke="#333"></path><circle cx="5" cy="15" r="2" stroke="#1e88e5" stroke-width="1.3"></circle><circle cx="13" cy="15" r="2" stroke="#1e88e5" stroke-width="1.3"></circle></svg>
<svg class="a" style="left:460px;top:253px" width="18" height="18" fill="none" stroke-width="1.1"><path d="M6 14.5H1.5V1.5h7v2" stroke="#333"></path><path d="M6.5 4.5h6l4 4v8.5h-10z M12.5 4.5v4h4 M9 11h5M9 13.5h5" stroke="#333"></path></svg>
<svg class="a" style="left:461px;top:281px" width="18" height="18" fill="none" stroke-width="1.1"><path d="M6 3.5H2.5v13H8" stroke="#e8801a" stroke-width="1.3"></path><path d="M5 2.5h6v3H5z" stroke="#333"></path><path d="M8.5 7.5h6v9h-6z" stroke="#333" fill="#fff"></path><path d="M11 3.5h2.5v3" stroke="#e8801a" stroke-width="1.3"></path></svg>
<svg class="a" style="left:486px;top:310px" width="24" height="25" fill="none" stroke-width="1.1"><path d="M5 4.5H2.5v18H9M15 4.5h2.5v8" stroke="#e8801a" stroke-width="1.3"></path><path d="M6 3.5h8v3H6z" stroke="#333"></path><path d="M5 10h10M5 13h8M5 16h6" stroke="#e84c3d"></path><path d="M5 10h10" stroke="#1e88e5"></path><path d="M8 23c1-4 3-6 5-5 1 2 0 5-5 5z" fill="#1e88e5" stroke="#1e88e5"></path><path d="M13 18l9-9" stroke="#333" stroke-width="2"></path><path d="M13 18l9-9" stroke="#fff" stroke-width="0.6"></path></svg>
<svg class="a" style="left:516px;top:310px" width="24" height="25" fill="none" stroke-width="1.1"><path d="M5 4.5H2.5v18h14.5v-5M15 4.5h2.5v6" stroke="#e8801a" stroke-width="1.3"></path><path d="M6 3.5h8v3H6z" stroke="#333"></path><path d="M8 17h14M18.5 13.5l3.5 3.5-3.5 3.5" stroke="#1e88e5" stroke-width="1.2"></path></svg>
<svg class="a" style="left:546px;top:310px" width="24" height="25" fill="none" stroke-width="1.1"><path d="M5 4.5H2.5v18H10M15 4.5h2.5v6" stroke="#e8801a" stroke-width="1.3"></path><path d="M6 3.5h8v3H6z" stroke="#333"></path><path d="M11 23.5l4.5-12 4.5 12M12.5 19h6" stroke="#444" stroke-width="1.2"></path></svg>
<svg class="a" style="left:460px;top:349px" width="18" height="15" fill="none" stroke-width="1.1"><rect x="2" y="1.5" width="14" height="12" stroke="#333"></rect><g fill="#fff" stroke="#1e88e5"><rect x="0.5" y="0" width="3" height="3"></rect><rect x="14.5" y="0" width="3" height="3"></rect><rect x="0.5" y="12" width="3" height="3"></rect><rect x="14.5" y="12" width="3" height="3"></rect></g><text x="9" y="11" font-size="9.5" font-weight="bold" fill="#1e88e5" stroke="none" text-anchor="middle" font-family="Liberation Sans">A</text></svg>
<svg class="a" style="left:460px;top:376px" width="18" height="16" fill="none" stroke-width="1.1"><path d="M3 13c0-5 3-10 9-10M6 13.5h7M12.5 4l-3 4 3 3" stroke="#333" stroke-dasharray="2.5 1.2"></path><g fill="#1e88e5"><rect x="0.5" y="11" width="3.5" height="3.5"></rect><rect x="13.5" y="11" width="3.5" height="3.5"></rect><rect x="4" y="1" width="3.5" height="3.5"></rect><rect x="13.5" y="1" width="3.5" height="3.5"></rect></g></svg>
<svg class="a" style="left:460px;top:406px" width="18" height="18" fill="none" stroke-width="1.1"><rect x="4.5" y="4.5" width="7" height="7" stroke="#a6a6a6"></rect><rect x="7.5" y="7.5" width="7" height="7" stroke="#a6a6a6"></rect><path d="M1 1h2M15 1h2M1 17h2M15 17h2M1 1v2M17 1v2M1 17v-2M17 17v-2" stroke="#a6a6a6"></path></svg>
<svg class="a" style="left:460px;top:434px" width="18" height="18" fill="none" stroke-width="1.1"><path d="M1.5 6V1.5h5M16.5 12v4.5h-5" stroke="#333"></path><rect x="4" y="4" width="10" height="10" fill="#fbd88f" stroke="#e8801a" stroke-width="1.2"></rect></svg>
<svg class="a" style="left:460px;top:462px" width="18" height="18" fill="none" stroke-width="1.1"><rect x="1.5" y="1.5" width="6" height="6" stroke="#333" fill="#fff"></rect><path d="M5 7.5v6h7.5M7.5 5h6v7" stroke="#e8801a" stroke-width="1.2"></path><rect x="10.5" y="10.5" width="6" height="6" stroke="#333" fill="#fff"></rect></svg>
<svg class="a" style="left:460px;top:497px" width="18" height="13" fill="none" stroke="#333" stroke-width="1.1"><rect x="1" y="1.2" width="10" height="6.3" rx="3.1"></rect><rect x="6.8" y="5" width="10" height="6.3" rx="3.1"></rect></svg>
<svg class="a" style="left:460px;top:554px" width="18" height="20" fill="none" stroke-width="1.1"><rect x="1.5" y="1.5" width="15" height="12" stroke="#333" fill="#cfe4f7"></rect><path d="M2 13l5-6 4 4 2-2 3.5 4z" fill="#3d8bd9" stroke="none"></path><circle cx="13" cy="4.5" r="1.3" fill="#e8801a" stroke="none"></circle><path d="M1 17.5h6M10 17.5h7" stroke="#e8392a" stroke-width="1.3"></path></svg>
<svg class="a" style="left:461px;top:584px" width="17" height="15" fill="none" stroke-width="1.1"><path d="M0 1.5h16M0 13.5h16M0 5.5h3M13 5.5h3M0 9.5h3M13 9.5h3" stroke="#1e88e5"></path><path d="M5 10a3 3 0 0 1 6 0" stroke="#333" stroke-width="2"></path></svg>
<svg class="a" style="left:460px;top:613px" width="18" height="20" fill="none" stroke-width="1.1"><path d="M8 13.5H1.5v-12h15v7" stroke="#333"></path><path d="M2 12l5-5 4 4 1.5-1.5" stroke="#333"></path><circle cx="13" cy="5" r="1.1" fill="#333" stroke="none"></circle><rect x="7.5" y="10.5" width="10" height="7" fill="#fff" stroke="#1e88e5"></rect><path d="M10 14h5" stroke="#1e88e5"></path></svg>
<svg class="a" style="left:460px;top:670px" width="18" height="18" fill="none" stroke-width="1.1"><path d="M0 2.5h4M0 6h4M0 9.5h4M0 13h4M0 15.5h18M0 17.5h18" stroke="#333"></path><rect x="5.5" y="3" width="11" height="9" stroke="#1e88e5" stroke-width="1.3"></rect><g fill="#333"><rect x="4" y="1.5" width="3" height="3"></rect><rect x="15" y="1.5" width="3" height="3"></rect><rect x="4" y="10.5" width="3" height="3"></rect><rect x="15" y="10.5" width="3" height="3"></rect></g></svg>
<svg class="a" style="left:460px;top:697px" width="18" height="19" fill="none" stroke-width="1.1"><path d="M5 1.5h2.5v3.5l4 4-5 5-5-5 3.5-3.5z" fill="#fff" stroke="#333"></path><path d="M5 17c0-3 2-4 4-3.5 0.5 2-1 3.5-4 3.5z" fill="#1e88e5" stroke="#1e88e5"></path><path d="M9 13.5l8-8" stroke="#333" stroke-width="2"></path></svg>
<!-- SUBMENU -->
<div class="a" style="left:630px;top:368px;width:186px;height:356px;background:#fff;border:3px solid #000;border-radius:6px"></div>
<div class="a" style="left:634px;top:400px;width:179px;height:1px;background:#e1dfdd"></div>
<div class="a" style="left:634px;top:515px;width:179px;height:1px;background:#e1dfdd"></div>
<div class="a" style="left:634px;top:574px;width:179px;height:1px;background:#e1dfdd"></div>
<div class="a" style="left:634px;top:605px;width:179px;height:1px;background:#e1dfdd"></div>
<div class="a" style="left:664px;top:664px;width:149px;height:1px;background:#e1dfdd"></div>
<div class="a" style="left:642px;top:548px;width:20px;height:20px;background:#c6c6c6;border:1px solid #9e9e9e"></div>
<svg class="a" style="left:643px;top:378px" width="18" height="14" fill="none" stroke-width="1.1"><path d="M0 1.5h17M9 7.5h8M0 12.5h17" stroke="#1e88e5"></path><path d="M2 8a3 3 0 0 1 6 0" stroke="#333" stroke-width="2"></path></svg>
<svg class="a" style="left:643px;top:408px" width="18" height="15" fill="none" stroke-width="1.1"><path d="M0 1.5h17M0 13.5h17M0 5.5h3M14 5.5h3M0 9.5h3M14 9.5h3" stroke="#1e88e5"></path><path d="M5.5 10a3 3 0 0 1 6 0" stroke="#333" stroke-width="2"></path></svg>
<svg class="a" style="left:643px;top:436px" width="18" height="15" fill="none" stroke-width="1.1"><path d="M0 1.5h17M0 13.5h17M0 5.5h3M14 5.5h3M0 9.5h3M14 9.5h3" stroke="#1e88e5"></path><path d="M5.5 10a3 3 0 0 1 6 0" stroke="#333" stroke-width="2"></path></svg>
<svg class="a" style="left:643px;top:464px" width="18" height="15" fill="none" stroke-width="1.1"><path d="M0 1.5h17M0 13.5h17M0 5.5h3M14 5.5h3M0 9.5h3M14 9.5h3" stroke="#1e88e5"></path><path d="M5.5 10a3 3 0 0 1 6 0" stroke="#333" stroke-width="2"></path><path d="M7 9.5h3" stroke="#1e88e5"></path></svg>
<svg class="a" style="left:643px;top:492px" width="18" height="15" fill="none" stroke-width="1.1"><path d="M0 1.5h17M0 13.5h17" stroke="#1e88e5"></path><path d="M5.5 10a3 3 0 0 1 6 0" stroke="#333" stroke-width="2"></path></svg>
<svg class="a" style="left:643px;top:522px" width="18" height="15" fill="none" stroke-width="1.1"><path d="M0 1.5h17M0 5.5h17M0 9.5h17M0 13.5h17" stroke="#1e88e5"></path><path d="M5.5 10a3 3 0 0 1 6 0" stroke="#bdbdbd" stroke-width="2"></path></svg>
<svg class="a" style="left:643px;top:551px" width="18" height="15" fill="none" stroke-width="1.1"><path d="M0 1.5h17M0 5.5h17M0 9.5h17M0 13.5h17" stroke="#1e88e5"></path><path d="M5.5 10a3 3 0 0 1 6 0" stroke="#333" stroke-width="2"></path></svg>
<svg class="a" style="left:642px;top:580px" width="20" height="18" fill="none"><path d="M4 5.5L7 2h9.5v13H4z" stroke="#555" stroke-width="1.1"></path><g fill="#1e88e5"><rect x="5.5" y="0.5" width="3" height="3"></rect><rect x="15" y="0.5" width="3" height="3"></rect><rect x="2.5" y="4" width="3" height="3"></rect><rect x="2.5" y="13.5" width="3" height="3"></rect><rect x="15" y="13.5" width="3" height="3"></rect></g><path d="M7 12.5a3 3 0 0 1 6 0" stroke="#333" stroke-width="2"></path></svg>
<svg class="a" style="left:646px;top:615px" width="12" height="10" fill="none" stroke-width="1.1"><path d="M1 5l3.5 3.5L11 1" stroke="#444" stroke-width="1.3"></path></svg>
<svg class="a" style="left:643px;top:670px" width="18" height="18" fill="none" stroke-width="1.1"><path d="M0 2.5h4M0 6h4M0 9.5h4M0 13h4M0 15.5h18M0 17.5h18" stroke="#333"></path><rect x="5.5" y="3" width="11" height="9" stroke="#1e88e5" stroke-width="1.3"></rect><g fill="#333"><rect x="4" y="1.5" width="3" height="3"></rect><rect x="15" y="1.5" width="3" height="3"></rect><rect x="4" y="10.5" width="3" height="3"></rect><rect x="15" y="10.5" width="3" height="3"></rect></g></svg>
<div class="a" w="85.6" style="left: 669.2px; top: 378.1px; font-size: 12px; color: rgb(89, 89, 89); transform: scaleX(0.9972); transform-origin: 0px 0px;"><u>I</u>n Line with Text</div>
<div class="a" w="35.8" style="left: 669.2px; top: 409.1px; font-size: 12px; color: rgb(89, 89, 89); transform: scaleX(0.9246); transform-origin: 0px 0px;"><u>S</u>quare</div>
<div class="a" w="26.7" style="left: 669.2px; top: 437.1px; font-size: 12px; color: rgb(89, 89, 89); transform: scaleX(1.0171); transform-origin: 0px 0px;"><u>T</u>ight</div>
<div class="a" w="44.1" style="left: 669.2px; top: 465.1px; font-size: 12px; color: rgb(89, 89, 89); transform: scaleX(0.9858); transform-origin: 0px 0px;">T<u>h</u>rough</div>
<div class="a" w="85.1" style="left: 669.2px; top: 493.1px; font-size: 12px; color: rgb(89, 89, 89); transform: scaleX(1.0122); transform-origin: 0px 0px;">T<u>o</u>p and Bottom</div>
<div class="a" w="61.7" style="left: 669.2px; top: 523.5px; font-size: 12px; color: rgb(89, 89, 89); transform: scaleX(0.987); transform-origin: 0px 0px;">Behin<u>d</u> Text</div>
<div class="a" w="79.5" style="left: 669.2px; top: 551.7px; font-size: 12px; color: rgb(89, 89, 89); transform: scaleX(0.9957); transform-origin: 0px 0px;">I<u>n</u> Front of Text</div>
<div class="a" w="86.7" style="left: 669.2px; top: 583.1px; font-size: 12px; color: rgb(89, 89, 89); transform: scaleX(0.9723); transform-origin: 0px 0px;"><u>E</u>dit Wrap Points</div>
<div class="a" w="81.1" style="left: 669.2px; top: 613.7px; font-size: 12px; color: rgb(38, 38, 38); transform: scaleX(1.0246); transform-origin: 0px 0px;"><u>M</u>ove with Text</div>
<div class="a" w="107.0" style="left: 669.2px; top: 641.8px; font-size: 12px; color: rgb(38, 38, 38); transform: scaleX(0.972); transform-origin: 0px 0px;"><u>F</u>ix Position on Page</div>
<div class="a" w="120.5" style="left: 669.2px; top: 672.1px; font-size: 12px; color: rgb(38, 38, 38); transform: scaleX(0.9924); transform-origin: 0px 0px;">More <u>L</u>ayout Options...</div>
<div class="a" w="109.5" style="left: 669.2px; top: 700.4px; font-size: 12px; color: rgb(166, 166, 166); transform: scaleX(0.9541); transform-origin: 0px 0px;">Set as Def<u>a</u>ult Layout</div>
<svg class="a" style="left:629px;top:604px" width="12" height="19"><path d="M1 1v15l3.5-3.5 2.5 5.5 2-1-2.5-5.5h5z" fill="#fff" stroke="#000" stroke-width="1"></path></svg>
<!-- ANNOTATION -->
<div class="a" w="116.5" style="left: 162px; top: 639.6px; font-size: 23.5px; font-weight: bold; color: rgb(0, 0, 0); transform: scaleX(1.0454); transform-origin: 0px 0px;">Wrap Text</div>
<svg class="a" style="left:0;top:0" width="1271" height="728"><path d="M287 653L435 598" stroke="#000" stroke-width="3.2" fill="none"></path><path d="M447.5 593.7L431 593.7L435.5 598.5L435 603.6z" fill="#000"></path></svg>

<!-- window borders -->
<div class="a" style="left:0;top:0;width:1px;height:728px;background:#2b579a"></div>
<div class="a" style="left:1270px;top:0;width:1px;height:728px;background:#2b579a"></div>
<div class="a" style="left:0;top:727px;width:1271px;height:1px;background:#2b579a"></div>

</body></html>
